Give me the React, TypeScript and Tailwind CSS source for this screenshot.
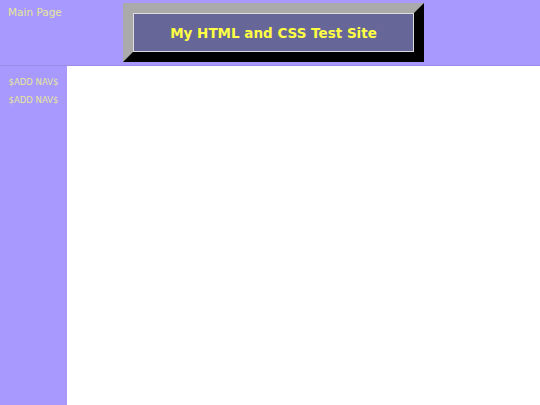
export default function App() {
  return (
    <div className="min-h-[405px] bg-white font-['DejaVu_Sans',sans-serif] flex flex-col">
      <header className="h-[66px] bg-[#a899ff] border-b border-[#9a8ae6] flex items-start">
        <a className="mt-[5px] ml-[8px] text-[10.5px] text-[#e6e69a] w-[115px]">Main Page</a>
        <div className="mt-[3px] w-[301px] h-[59px] border-[10px] border-l-[#aaaaaa] border-t-[#aaaaaa] border-r-black border-b-black">
          <div className="h-full border border-[#dddddd] bg-[#666699] flex items-center justify-center pt-[2px]">
            <h1 className="text-[13.5px] font-bold text-[#ffff44]">My HTML and CSS Test Site</h1>
          </div>
        </div>
      </header>
      <div className="flex flex-1">
        <nav className="w-[67px] bg-[#a899ff] pt-[10px] flex flex-col items-center gap-[6px]">
          <a className="text-[8.5px] text-[#e6e69a] leading-[12px]">$ADD NAV$</a>
          <a className="text-[8.5px] text-[#e6e69a] leading-[12px]">$ADD NAV$</a>
        </nav>
        <main className="flex-1 bg-white" />
      </div>
    </div>
  );
}
